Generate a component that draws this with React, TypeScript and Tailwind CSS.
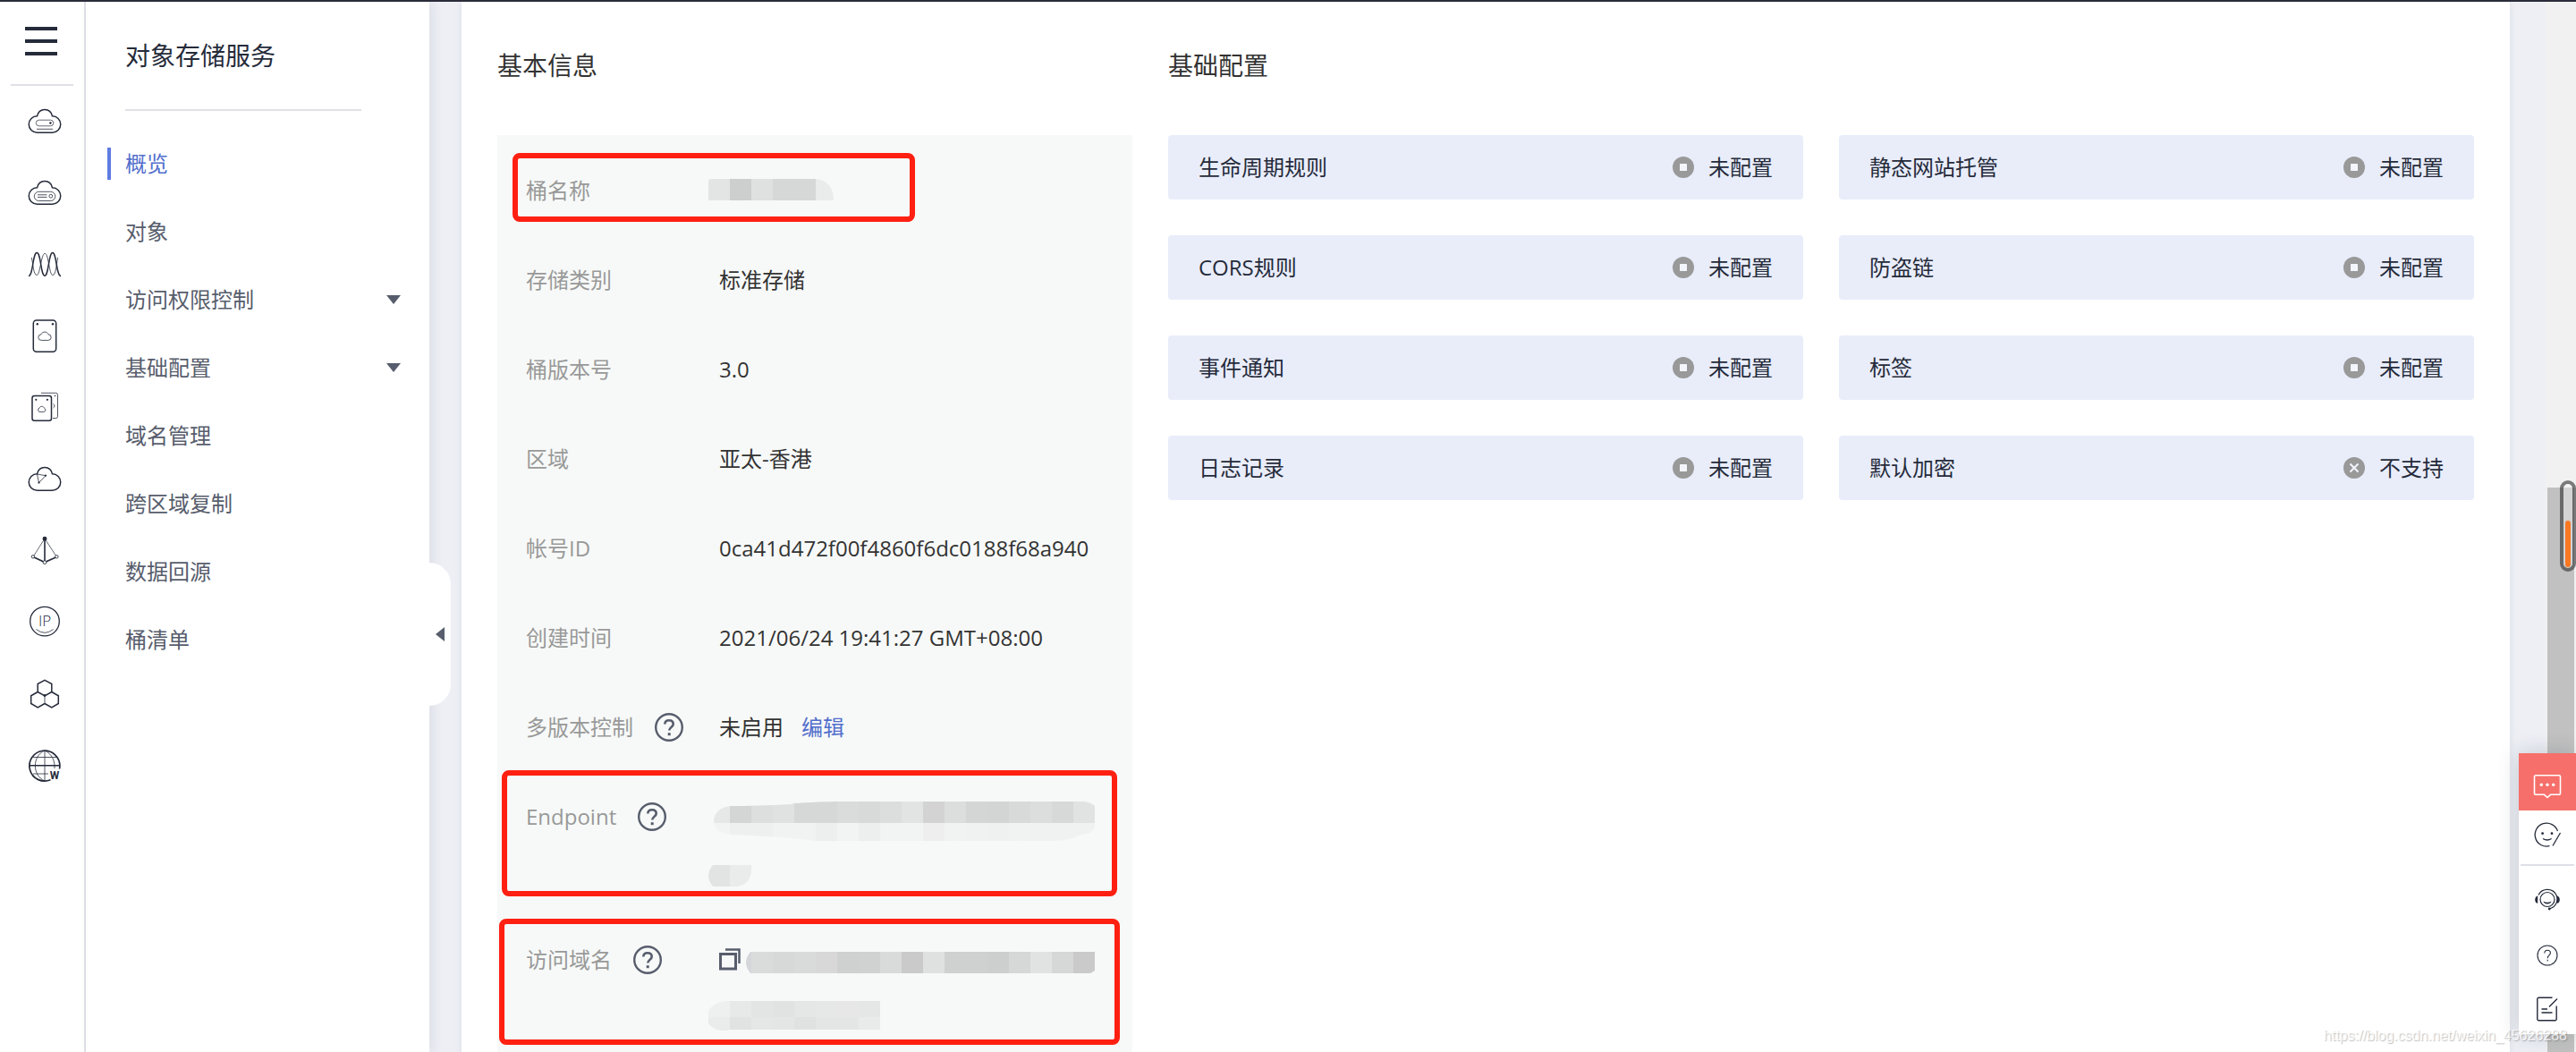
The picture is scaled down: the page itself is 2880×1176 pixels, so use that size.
import { useState } from 'react';
import type { ReactNode } from 'react';

const CLOUD = 'M11.5 13.8C12.5 9.5 15.8 6.6 20 6.6s7.5 2.9 8.5 7.2a9.25 9.25 0 0 1 0 18.5h-17a9.25 9.25 0 0 1 0-18.5Z';

interface NavItem {
  label: string;
  expandable?: boolean;
}

interface ConfigItem {
  label: string;
  status: string;
  supported?: boolean;
}

const navItems: NavItem[] = [
  { label: '概览' },
  { label: '对象' },
  { label: '访问权限控制', expandable: true },
  { label: '基础配置', expandable: true },
  { label: '域名管理' },
  { label: '跨区域复制' },
  { label: '数据回源' },
  { label: '桶清单' },
];

const configItems: ConfigItem[] = [
  { label: '生命周期规则', status: '未配置' },
  { label: '静态网站托管', status: '未配置' },
  { label: 'CORS规则', status: '未配置' },
  { label: '防盗链', status: '未配置' },
  { label: '事件通知', status: '未配置' },
  { label: '标签', status: '未配置' },
  { label: '日志记录', status: '未配置' },
  { label: '默认加密', status: '不支持', supported: false },
];

const services: { name: string; icon: ReactNode }[] = [
  {
    name: '弹性云服务器',
    icon: (
      <>
        <path d={CLOUD} />
        <rect x="10.3" y="18.2" width="19.5" height="6.6" rx="3.3" strokeWidth="0.7" />
        <circle cx="26.4" cy="21.5" r="1.2" fill="currentColor" stroke="none" />
        <path d="M11 28.3h18" strokeWidth="0.8" />
      </>
    ),
  },
  {
    name: '裸金属服务器',
    icon: (
      <>
        <path d={CLOUD} />
        <rect x="8.3" y="18.3" width="23.5" height="10.2" rx="5.1" strokeWidth="0.8" />
        <path d="M12 21.8h10.5M12 24.4h10.5" strokeWidth="0.8" />
        <circle cx="26.8" cy="23.2" r="1.9" strokeWidth="0.8" />
      </>
    ),
  },
  {
    name: '弹性伸缩',
    icon: (
      <>
        <path d="M2 32.5C7 32.5 6.5 6.6 11.2 6.6S15.5 32.2 20 32.2 24.3 6.6 28.8 6.6 33 32.5 38 32.5" />
        <path d="M5.4 12C7 20 7.5 31.5 11.2 31.5S16 7.3 20.2 7.3 25 31.5 28.8 31.5 33 20 34.6 12" strokeWidth="0.8" />
      </>
    ),
  },
  {
    name: '云硬盘',
    icon: (
      <>
        <rect x="7.3" y="2" width="25.4" height="35.2" rx="3.5" />
        <circle cx="11.8" cy="6.3" r="1.2" fill="currentColor" stroke="none" />
        <circle cx="29" cy="6.3" r="1.2" fill="currentColor" stroke="none" />
        <path d="M16 17.8c.8-1.8 2.2-2.7 4-2.7s3.3.9 4 2.7a3.3 3.3 0 0 1-.3 6.6h-7.4a3.3 3.3 0 0 1-.3-6.6Z" strokeWidth="0.8" />
      </>
    ),
  },
  {
    name: '云硬盘备份',
    icon: (
      <>
        <path d="M16 3.3h16.5a2 2 0 0 1 2 2v24.200a2 2 0 0 1-2 2H29M29.5 15.5a2.5 2.5 0 0 1 0 4.5" strokeWidth="0.8" />
        <rect x="6" y="6.5" width="21.5" height="27.8" rx="2.5" />
        <circle cx="10.3" cy="10.8" r="1.1" fill="currentColor" stroke="none" />
        <circle cx="22.9" cy="10.8" r="1.1" fill="currentColor" stroke="none" />
        <circle cx="31.5" cy="6.5" r="0.8" fill="currentColor" stroke="none" />
        <path d="M14 20.2c.5-1.3 1.4-1.9 2.7-1.9s2.2.6 2.7 1.9a2.2 2.2 0 0 1-.2 4.2h-5a2.2 2.2 0 0 1-.2-4.2Z" strokeWidth="0.8" />
      </>
    ),
  },
  {
    name: '虚拟私有云',
    icon: (
      <>
        <path d={CLOUD} />
        <path d="M11.5 14 21 15.7l-7.5 7.9Z" strokeWidth="0.8" />
        <circle cx="21" cy="15.7" r="1.1" fill="currentColor" stroke="none" />
        <circle cx="13.5" cy="23.6" r="1.1" fill="currentColor" stroke="none" />
      </>
    ),
  },
  {
    name: '弹性负载均衡',
    icon: (
      <>
        <path d="m20 6-13 20.5M20 6l13.3 20.5" strokeWidth="0.7" />
        <path d="M20 6v26M7.5 26.8 20 32.5l13-5.7" strokeWidth="1.6" />
        <circle cx="20" cy="6.2" r="2.4" fill="currentColor" stroke="none" />
        <circle cx="6.9" cy="26.3" r="1.7" fill="white" strokeWidth="0.9" />
        <circle cx="33.4" cy="26.3" r="1.7" fill="white" strokeWidth="0.9" />
        <circle cx="20" cy="32.6" r="1.9" fill="white" strokeWidth="0.9" />
      </>
    ),
  },
  {
    name: '弹性公网IP',
    icon: (
      <>
        <circle cx="20" cy="18.6" r="16.3" strokeWidth="1.3" />
        <text x="20" y="23.9" textAnchor="middle" fontSize="17" fontWeight="300" fill="currentColor" stroke="none" fontFamily="Open Sans, sans-serif">IP</text>
        <path d="M10.5 27.5q9.5 7.6 19 0" strokeWidth="0.8" />
      </>
    ),
  },
  {
    name: '容器引擎',
    icon: (
      <>
        <path d="m20 21.8-7.8-4.3v-9L20 4.3l7.8 4.2v9ZM12.2 17.5l-7.5 4.3v8.7l7.5 4.3 7.8-4.3M27.8 17.5l7.5 4.3v8.7l-7.5 4.3-7.8-4.3" />
        <path d="M20 21.8v8.7" strokeWidth="0.8" />
        <circle cx="20" cy="21.5" r="1.4" fill="currentColor" stroke="none" />
      </>
    ),
  },
  {
    name: '云解析服务',
    icon: (
      <>
        <path d="M26.5 35.8A17 17 0 1 1 36.9 20.5l-.3 3" strokeWidth="1.7" />
        <path d="M20 3v34M7 10.500h26M7 29h17M20 3C5.800 9 5.800 31 20 37M20 3c8.500 4 11.500 12 11 20" strokeWidth="0.8" />
        <path d="M3 19.7h34" />
        <text x="31" y="34.5" textAnchor="middle" fontSize="12" fontWeight="700" fill="currentColor" stroke="none" fontFamily="Roboto, sans-serif">W</text>
      </>
    ),
  },
];

const HelpIcon = () => (
  <svg className="size-8 shrink-0 text-[#575d6c]" viewBox="0 0 32 32" fill="none" stroke="currentColor" strokeWidth="2.4">
    <circle cx="16" cy="16" r="14.8" />
    <path d="M11.3 12.6c0-2.7 1.9-4.4 4.7-4.4s4.7 1.7 4.7 4.2c0 3.2-4.5 3.8-4.5 7.2" strokeWidth="2.6" />
    <path d="M16.2 22.2v3" strokeWidth="3" />
  </svg>
);

const StatusIcon = ({ supported }: { supported: boolean }) => (
  <svg className="size-6 shrink-0" viewBox="0 0 24 24">
    <circle cx="12" cy="12" r="12" fill="#999999" />
    {supported ? (
      <rect x="8" y="8" width="8" height="8" rx="0.5" fill="#f3f5fc" />
    ) : (
      <path d="m7.5 7.5 9 9m0-9-9 9" stroke="#f3f5fc" strokeWidth="2" />
    )}
  </svg>
);

const HighlightBox = ({ className }: { className: string }) => (
  <div className={`pointer-events-none absolute rounded-lg border-[6px] border-[#ff2012] ${className}`} />
);

interface InfoRowProps {
  label: string;
  help?: boolean;
  children: ReactNode;
  highlight?: string;
}

const InfoRow = ({ label, help, children, highlight }: InfoRowProps) => (
  <div className="relative flex items-start px-8 py-8">
    <dt className="flex w-[216px] shrink-0 items-center gap-6 text-[#999999]">
      {label}
      {help && (
        <button type="button" aria-label={`${label}说明`}>
          <HelpIcon />
        </button>
      )}
    </dt>
    <dd className="min-w-0 flex-1 text-[#333333]">{children}</dd>
    {highlight && <HighlightBox className={highlight} />}
  </div>
);

// Pixelated strips that hide the private values
const Cells = ({ colors, y, height, x = 0 }: { colors: string[]; y: number; height: number; x?: number }) => (
  <>
    {colors.map((color, i) => (
      <rect key={i} x={x + i * 24} y={y} width="24" height={height} fill={color} />
    ))}
  </>
);

const NameMask = () => (
  <svg className="-ml-3 h-9 w-[140px]" viewBox="0 0 140 36">
    <clipPath id="name-mask">
      <path d="M2 5h118c13 1 20 10 20 24H0V7Z" />
    </clipPath>
    <g clipPath="url(#name-mask)">
      <Cells y={5} height={24} colors={['#e3e5e4', '#cdcfce', '#dfe1e0', '#d6d8d7', '#d6d8d7', '#eaecec']} />
    </g>
  </svg>
);

const EndpointMask = () => (
  <svg className="-ml-3 h-24 w-[432px]" viewBox="0 -2 432 96">
    <clipPath id="endpoint-mask">
      <path d="M24 4q30 0 68-2 4-2 52-3h276q8 1 12 5v24q-2 7-16 8-10 7-36 7H120Q80 38 24 36 6 34 6 20 8 6 24 4ZM5 70h43v8q-2 14-16 16H5q-10-12 0-24Z" />
    </clipPath>
    <g clipPath="url(#endpoint-mask)">
      <Cells
        y={-1}
        height={24}
        colors={['#e6e8e7', '#d4d6d5', '#dddfde', '#e0e2e1', '#d6d8d7', '#d6d8d7', '#dadcdb', '#d8dad9', '#dcdedd', '#e2e4e3', '#d4d3d3', '#dcdedd', '#d4d6d5', '#d3d5d4', '#d8dad9', '#dcdedd', '#d7d9d8', '#e1e3e2']}
      />
      <Cells
        y={23}
        height={20}
        colors={['#f2f4f3', '#eef0ef', '#eef0ef', '#f1f3f2', '#f1f3f2', '#edefee', '#f2f4f3', '#edefee', '#f2f4f3', '#f2f4f3', '#edeeed', '#f1f3f2', '#f0f2f1', '#eff1f0', '#f1f3f2', '#f0f2f1', '#f0f2f1', '#f0f2f1']}
      />
      <Cells y={70} height={24} colors={['#e2e4e3', '#eaecec']} />
    </g>
  </svg>
);

const DomainMask = () => (
  <div className="flex flex-col">
    <div className="flex items-center gap-1.5">
      <button type="button" aria-label="复制">
        <svg className="block h-9 w-6 text-[#575d6c]" viewBox="0 0 24 36" fill="none" stroke="currentColor" strokeWidth="3">
          <rect x="1.5" y="11.5" width="17" height="16.5" />
          <path d="M7 6.500h15.500V22" strokeWidth="2.5" />
        </svg>
      </button>
      <svg className="h-9 w-[390px]" viewBox="0 0 390 36">
        <clipPath id="domain-mask">
          <path d="M5 9h385v21l-5 3H5q-10-12 0-24Z" />
        </clipPath>
        <g clipPath="url(#domain-mask)">
          <Cells
            x={-18}
            y={9}
            height={24}
            colors={['#d5d6da', '#dadcdb', '#d7d9d8', '#d9dbda', '#d8d8d8', '#cfd1d0', '#d0d2d1', '#d9dbda', '#cacaca', '#dfe1e0', '#cfd1d0', '#cfd1d0', '#cdcfce', '#d6d8d7', '#e1e3e2', '#d6d8d7', '#cacaca']}
          />
        </g>
      </svg>
    </div>
    <svg className="-ml-3 mt-7 h-[33px] w-48" viewBox="0 0 192 33">
      <clipPath id="domain-mask-tail">
        <path d="M20 0h172v32H24q-16 4-24-7V10Q8 1 20 0Z" />
      </clipPath>
      <g clipPath="url(#domain-mask-tail)">
        <Cells y={0} height={18} colors={['#eef0ef', '#e7e9e8', '#e3e5e4', '#e1e3e2', '#e5e7e6', '#e6e7e7', '#e7e7e7', '#e5e7e6']} />
        <Cells y={18} height={15} colors={['#eaecec', '#e1e3e2', '#e5e7e6', '#e4e6e5', '#e0e2e1', '#e4e6e5', '#e4e6e5', '#e9ebea']} />
      </g>
    </svg>
  </div>
);

const ServiceRail = () => (
  <aside className="w-24 shrink-0 border-r-2 border-[#dfe1e8] bg-white">
    <button type="button" aria-label="服务列表" className="ml-7 flex h-[92px] flex-col gap-2.5 pt-7">
      <span className="block h-1 w-9 bg-[#252b3a]" />
      <span className="block h-1 w-9 bg-[#252b3a]" />
      <span className="block h-1 w-9 bg-[#252b3a]" />
    </button>
    <div className="ml-3 h-0.5 w-[70px] bg-[#dfe1e8]" />
    {services.map((service) => (
      <a key={service.name} href="#" aria-label={service.name} className="ml-[30px] flex h-20 items-center text-[#252b3a]">
        <svg className="size-10" viewBox="0 0 40 40" fill="none" stroke="currentColor" strokeWidth="1.5">
          {service.icon}
        </svg>
      </a>
    ))}
  </aside>
);

const SideMenu = () => {
  const [active, setActive] = useState('概览');

  return (
    <nav className="relative z-10 w-96 shrink-0 bg-white shadow-[4px_0_12px_rgba(37,43,58,0.08)]">
      <h2 className="flex h-[120px] items-center pl-11 text-[28px] text-[#252b3a]">对象存储服务</h2>
      <div className="ml-11 mr-[76px] h-0.5 bg-[#dfe1e8]" />
      <ul className="mt-[21px]">
        {navItems.map((item) => (
          <li key={item.label} className="flex h-[76px] items-center pl-6">
            <a
              href="#"
              onClick={() => setActive(item.label)}
              className={`flex h-9 flex-1 items-center justify-between border-l-4 pl-4 pr-8 ${
                active === item.label ? 'border-[#5e7ce0] text-[#526ecc]' : 'border-transparent text-[#575d6c]'
              }`}
            >
              {item.label}
              {item.expandable && (
                <svg className="h-2.5 w-4" viewBox="0 0 16 10" fill="#575d6c">
                  <path d="M0 0h16L8 10Z" />
                </svg>
              )}
            </a>
          </li>
        ))}
      </ul>
      <button
        type="button"
        aria-label="收起菜单"
        className="absolute -right-6 top-[627px] flex h-40 w-6 items-center justify-center rounded-r-3xl bg-white"
      >
        <svg className="h-4 w-2.5" viewBox="0 0 10 16" fill="#575d6c">
          <path d="M10 0v16L0 8Z" />
        </svg>
      </button>
    </nav>
  );
};

const SupportBar = () => (
  <div className="absolute bottom-5 right-0 z-20 flex w-16 flex-col bg-white text-[#252b3a] shadow-[0_0_24px_rgba(37,43,58,0.2)]">
    <button type="button" aria-label="智能客服" className="flex h-16 items-center justify-center bg-[#f66f6a] pt-3 text-white">
      <svg className="size-8" viewBox="0 0 32 32" fill="none" stroke="currentColor" strokeWidth="1.6">
        <path d="M3 2.800h26a1.500 1.500 0 0 1 1.500 1.500v18.500a1.500 1.500 0 0 1-1.500 1.500h-9.500L16 27.500l-3.500-3.200H3a1.500 1.500 0 0 1-1.500-1.500V4.300A1.500 1.500 0 0 1 3 2.800Z" />
        <circle cx="9.3" cy="13.300" r="1.7" fill="currentColor" stroke="none" />
        <circle cx="16" cy="13.300" r="1.7" fill="currentColor" stroke="none" />
        <circle cx="22.7" cy="13.300" r="1.7" fill="currentColor" stroke="none" />
      </svg>
    </button>
    <button type="button" aria-label="满意度评价" className="flex h-[60px] justify-center pt-[11px]">
      <svg className="size-8" viewBox="0 0 32 32" fill="none" stroke="currentColor" strokeWidth="1.3">
        <path d="M18.5 28.7A13 13 0 1 1 27.5 12" />
        <path d="M30.5 14 22 28.5" />
        <path d="M11 20.5q4.8 3 9.6 0" />
        <circle cx="10.6" cy="14.7" r="1.4" fill="currentColor" stroke="none" />
        <circle cx="21" cy="14.7" r="1.4" fill="currentColor" stroke="none" />
      </svg>
    </button>
    <div className="mx-0.5 h-0.5 bg-[#dfe1e8]" />
    <button type="button" aria-label="在线客服" className="flex h-[72px] items-center justify-center pt-1">
      <svg className="size-8" viewBox="0 0 32 32" fill="none" stroke="currentColor" strokeWidth="1.2">
        <circle cx="16" cy="15.5" r="8" />
        <path d="M6 10.5a11.3 11.3 0 0 1 20 0c2.5 6 0 13.5-8 15.5" />
        <path d="M11.5 17.5q4.5 2.5 9 0c-.5 4-8.500 4-9 0Z" fill="currentColor" stroke="none" />
        <path d="M5.2 11.5v8.3C1.2 19.5 1.2 12 5.2 11.5ZM26.8 11.5v8.3c4-.3 4-7.8 0-8.3Z" fill="currentColor" stroke="none" />
        <circle cx="18.2" cy="26" r="1.4" fill="currentColor" stroke="none" />
      </svg>
    </button>
    <button type="button" aria-label="帮助" className="flex h-14 items-center justify-center">
      <svg className="size-6" viewBox="0 0 24 24" fill="none" stroke="currentColor" strokeWidth="1.1">
        <circle cx="12" cy="12" r="11" />
        <path d="M8.8 9.5c0-2 1.3-3.3 3.3-3.3s3.3 1.200 3.3 3c0 2.600-3.200 2.800-3.200 6M12.200 16.800v1.700" />
      </svg>
    </button>
    <button type="button" aria-label="意见反馈" className="flex h-[60px] items-center justify-center pt-1">
      <svg className="size-8" viewBox="0 0 32 32" fill="none" stroke="currentColor" strokeWidth="1.4">
        <path d="M21.5 3.200H6.300a1.500 1.500 0 0 0-1.500 1.500v22.600a1.500 1.500 0 0 0 1.500 1.500h18.400a1.500 1.500 0 0 0 1.500-1.500V12.500M27 4.500l-9 9M9.500 16H16M9.500 20h12" />
      </svg>
    </button>
  </div>
);

const App = () => {
  return (
    <div className="relative flex h-screen overflow-hidden border-t-2 border-[#2a2c3a] bg-[#edeff5] font-['Open_Sans','Noto_Sans_CJK_SC',sans-serif] text-2xl/9">
      <ServiceRail />
      <SideMenu />

      <main className="min-w-0 flex-1 pl-9 pr-10">
        <div className="grid min-h-full grid-cols-3 gap-x-10 bg-white px-10 pt-[53px] shadow-[0_0_8px_rgba(37,43,58,0.08)]">
          <section>
            <h3 className="mb-[60px] text-[28px]/9 text-[#333333]">基本信息</h3>
            <dl className="bg-[#f7f9f8] pt-3">
              <InfoRow label="桶名称" highlight="left-[17px] right-[243px] top-2 bottom-[15px]">
                <NameMask />
              </InfoRow>
              <InfoRow label="存储类别">标准存储</InfoRow>
              <InfoRow label="桶版本号">3.0</InfoRow>
              <InfoRow label="区域">亚太-香港</InfoRow>
              <InfoRow label="帐号ID">0ca41d472f00f4860f6dc0188f68a940</InfoRow>
              <InfoRow label="创建时间">2021/06/24 19:41:27 GMT+08:00</InfoRow>
              <InfoRow label="多版本控制" help>
                未启用
                <a href="#" className="ml-5 text-[#526ecc]">编辑</a>
              </InfoRow>
              <InfoRow label="Endpoint" help highlight="left-[5px] right-[17px] -top-0.5 bottom-[21px]">
                <EndpointMask />
              </InfoRow>
              <InfoRow label="访问域名" help highlight="left-0.5 right-3.5 top-1 bottom-4">
                <DomainMask />
              </InfoRow>
            </dl>
          </section>

          <section className="col-span-2">
            <h3 className="mb-[60px] text-[28px]/9 text-[#333333]">基础配置</h3>
            <div className="grid grid-cols-2 gap-10">
              {configItems.map((item) => (
                <button
                  key={item.label}
                  type="button"
                  className="flex h-[72px] items-center gap-4 rounded bg-[#e9edfa] px-[34px] text-[#252b3a]"
                >
                  <span className="flex-1 text-left">{item.label}</span>
                  <StatusIcon supported={item.supported !== false} />
                  <span>{item.status}</span>
                </button>
              ))}
            </div>
          </section>
        </div>
      </main>

      {/* page scrollbar */}
      <div className="w-[34px] shrink-0 bg-[#f1f1f1] px-0.5 pt-[543px]">
        <div className="h-full bg-[#c1c1c1]" />
      </div>
      <div className="absolute right-0 top-[535px] z-20 flex h-[102px] w-[18px] items-end justify-center rounded-full border-4 border-black/50 bg-white/30 pb-px">
        <div className="h-[52px] w-1.5 rounded-full bg-[#fa7822]" />
      </div>

      <SupportBar />
      <p className="pointer-events-none absolute bottom-1 right-2.5 z-30 font-['Liberation_Sans',sans-serif] text-base/7 text-white/80 [text-shadow:1px_1px_1px_rgba(0,0,0,0.25)]">
        https://blog.csdn.net/weixin_45626288
      </p>
    </div>
  );
};

export default App;
